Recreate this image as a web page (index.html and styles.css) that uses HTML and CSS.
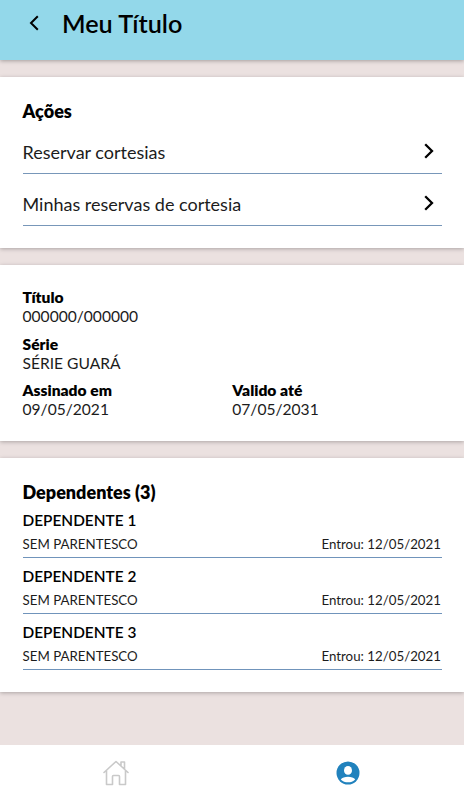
FILE: index.html
```html
<!DOCTYPE html>
<html lang="pt-BR">
<head>
    <meta charset="UTF-8">
    <meta name="viewport" content="width=device-width, initial-scale=1.0">
    <title>Meu Título</title>
    <link rel="stylesheet" href="styles.css">
</head>
<body>
    <header class="header">
        <svg class="back" viewBox="0 0 10 16"><path d="M8.8 1.2 L2 8 L8.8 14.8"/></svg>
        <h1>Meu Título</h1>
    </header>

    <main class="content">
        <!-- Ações -->
        <section class="card actions">
            <h2>Ações</h2>
            <a class="action">
                <span>Reservar cortesias</span>
                <svg class="arrow" viewBox="0 0 10 16"><path d="M1.2 1.2 L8 8 L1.2 14.8"/></svg>
            </a>
            <a class="action">
                <span>Minhas reservas de cortesia</span>
                <svg class="arrow" viewBox="0 0 10 16"><path d="M1.2 1.2 L8 8 L1.2 14.8"/></svg>
            </a>
        </section>

        <!-- Dados do título -->
        <section class="card details">
            <div class="field">
                <strong>Título</strong>
                <span>000000/000000</span>
            </div>
            <div class="field">
                <strong>Série</strong>
                <span>SÉRIE GUARÁ</span>
            </div>
            <div class="columns">
                <div class="field">
                    <strong>Assinado em</strong>
                    <span>09/05/2021</span>
                </div>
                <div class="field">
                    <strong>Valido até</strong>
                    <span>07/05/2031</span>
                </div>
            </div>
        </section>

        <!-- Dependentes -->
        <section class="card dependents">
            <h2>Dependentes (3)</h2>
            <div class="dependent">
                <h3>DEPENDENTE 1</h3>
                <div class="info"><span>SEM PARENTESCO</span><span>Entrou: 12/05/2021</span></div>
            </div>
            <div class="dependent">
                <h3>DEPENDENTE 2</h3>
                <div class="info"><span>SEM PARENTESCO</span><span>Entrou: 12/05/2021</span></div>
            </div>
            <div class="dependent">
                <h3>DEPENDENTE 3</h3>
                <div class="info"><span>SEM PARENTESCO</span><span>Entrou: 12/05/2021</span></div>
            </div>
        </section>
    </main>

    <nav class="tabs">
        <a class="tab">
            <svg class="home" viewBox="0 0 26 26"><path d="M1 12.5 L13 1.5 L25 12.5 M3.5 10.8 V24.5 H9.5 V16.5 Q9.5 15.5 10.5 15.5 H15.5 Q16.5 15.5 16.5 16.5 V24.5 H22.5 V10.8 M18 5.8 V2 H21.5 V9"/></svg>
        </a>
        <a class="tab">
            <svg class="user" viewBox="0 0 24 24"><circle class="disc" cx="12" cy="12" r="11.5"/><ellipse class="person" cx="12" cy="9.4" rx="4" ry="4.3"/><path class="person" d="M4.8 18.5 C7 14.7 17 14.7 19.2 18.5 C15.5 22.3 8.5 22.3 4.8 18.5 Z"/></svg>
        </a>
    </nav>
</body>
</html>
```
FILE: styles.css
```css
* {
    box-sizing: border-box;
}

body {
    display: flex;
    flex-direction: column;
    height: 100vh;
    margin: 0;
    background-color: #ebe1e0;
    font-family: 'Lato', sans-serif;
    color: #000;
    overflow: hidden;
}

h1, h2, h3 {
    margin: 0;
}

/* Cabeçalho */
.header {
    display: flex;
    align-items: center;
    height: 60px;
    flex-shrink: 0;
    padding: 0 0 14px 29px;
    background-color: #93d8ea;
    box-shadow: 0 1px 4px rgba(0, 0, 0, 0.3);
}

.header h1 {
    margin-left: 23px;
    font-size: 25.2px;
    font-weight: 600;
    line-height: 30px;
}

.back,
.arrow {
    width: 10px;
    height: 16px;
    fill: none;
    stroke: #000;
    stroke-width: 2;
}

.arrow {
    margin: -2px 8px 0 0;
    stroke-width: 2.3;
}

/* Cartões */
.content {
    display: flex;
    flex-direction: column;
    gap: 17px;
    flex: 1;
    padding-top: 17px;
}

.card {
    padding: 23px 22px 0 22.5px;
    background-color: #fff;
    box-shadow: 0 1px 4px rgba(0, 0, 0, 0.27);
}

.card h2 {
    font-size: 18px;
    font-weight: 800;
    line-height: 22px;
}

.actions {
    height: 171px;
}

.action {
    display: flex;
    align-items: center;
    justify-content: space-between;
    height: 52px;
    padding-top: 8px;
    border-bottom: 1px solid #7897b9;
    font-size: 18px;
    color: #1c1c1c;
}

.details {
    height: 176px;
}

.field {
    display: flex;
    flex-direction: column;
    height: 46.5px;
    font-size: 15.6px;
    line-height: 19px;
}

.field span,
.info {
    color: #1c1c1c;
}

.field strong {
    font-weight: 800;
}

.columns {
    display: grid;
    grid-template-columns: 1fr 1fr;
}

.dependents {
    height: 234px;
}

.dependents h2 {
    margin-bottom: -1px;
}

.dependent {
    height: 56px;
    padding-top: 7px;
    border-bottom: 1px solid #7094bb;
}

.dependent h3 {
    font-size: 15.4px;
    font-weight: 600;
    line-height: 22px;
}

.info {
    display: flex;
    justify-content: space-between;
    padding: 1px 1px 0 0;
    font-size: 13.3px;
    line-height: 24px;
}

/* Menu inferior */
.tabs {
    display: flex;
    flex-shrink: 0;
    height: 55px;
    background-color: #fff;
}

.tab {
    display: flex;
    flex: 1;
    align-items: center;
    justify-content: center;
}

.home {
    width: 26px;
    height: 26px;
    fill: none;
    stroke: #c9c9c9;
    stroke-width: 1.6;
    stroke-linejoin: round;
    stroke-linecap: round;
}

.user {
    width: 24px;
    height: 24px;
}

.disc {
    fill: #2182bd;
}

.person {
    fill: #fff;
}
```
